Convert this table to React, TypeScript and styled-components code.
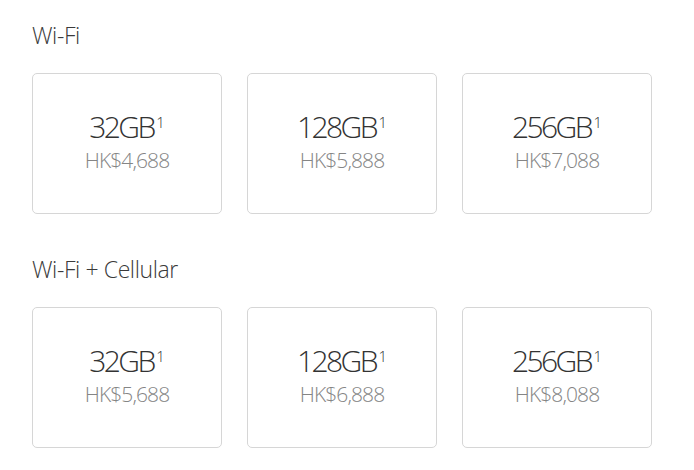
import React from "react";
import styled, { createGlobalStyle } from "styled-components";

const Global = createGlobalStyle`
  html, body { margin: 0; padding: 0; background: #ffffff; }
  body { font-family: "Open Sans", "Liberation Sans", sans-serif; }
`;

const Page = styled.div`
  width: 694px;
  height: 470px;
  box-sizing: border-box;
  padding: 20px 0 0 32px;
  overflow: hidden;
`;

const Section = styled.section`
  display: flex;
  flex-direction: column;
  margin-bottom: 40px;
`;

const Heading = styled.h2`
  margin: 0;
  font-size: 23px;
  line-height: 30px;
  font-weight: 300;
  letter-spacing: -0.4px;
  color: #3a3a3a;
`;

const Grid = styled.div`
  display: grid;
  grid-template-columns: repeat(3, 190px);
  column-gap: 25px;
  margin-top: 23px;
`;

const Card = styled.div`
  box-sizing: border-box;
  height: 141px;
  padding-bottom: 5px;
  border: 1px solid #d6d6d6;
  border-radius: 5px;
  display: flex;
  flex-direction: column;
  align-items: center;
  justify-content: center;
`;

const Size = styled.div`
  font-size: 30px;
  line-height: 34px;
  font-weight: 300;
  letter-spacing: -2.6px;
  color: #333333;
  margin-bottom: 3px;
  white-space: nowrap;
`;

const Sup = styled.span`
  display: inline-block;
  font-size: 15px;
  line-height: 1;
  letter-spacing: 0;
  vertical-align: 9.5px;
  margin-left: 2.5px;
  color: #333333;
`;

const Price = styled.div`
  font-size: 21px;
  line-height: 26px;
  font-weight: 300;
  letter-spacing: -0.9px;
  color: #858585;
  white-space: nowrap;
`;

const data = [
  { title: "Wi-Fi", items: [["32GB", "HK$4,688"], ["128GB", "HK$5,888"], ["256GB", "HK$7,088"]] },
  { title: "Wi-Fi + Cellular", items: [["32GB", "HK$5,688"], ["128GB", "HK$6,888"], ["256GB", "HK$8,088"]] },
];

export default function App() {
  return (
    <>
      <Global />
      <Page>
        {data.map((s) => (
          <Section key={s.title}>
            <Heading>{s.title}</Heading>
            <Grid>
              {s.items.map(([size, price]) => (
                <Card key={size}>
                  <Size>
                    {size}
                    <Sup>1</Sup>
                  </Size>
                  <Price>{price}</Price>
                </Card>
              ))}
            </Grid>
          </Section>
        ))}
      </Page>
    </>
  );
}
